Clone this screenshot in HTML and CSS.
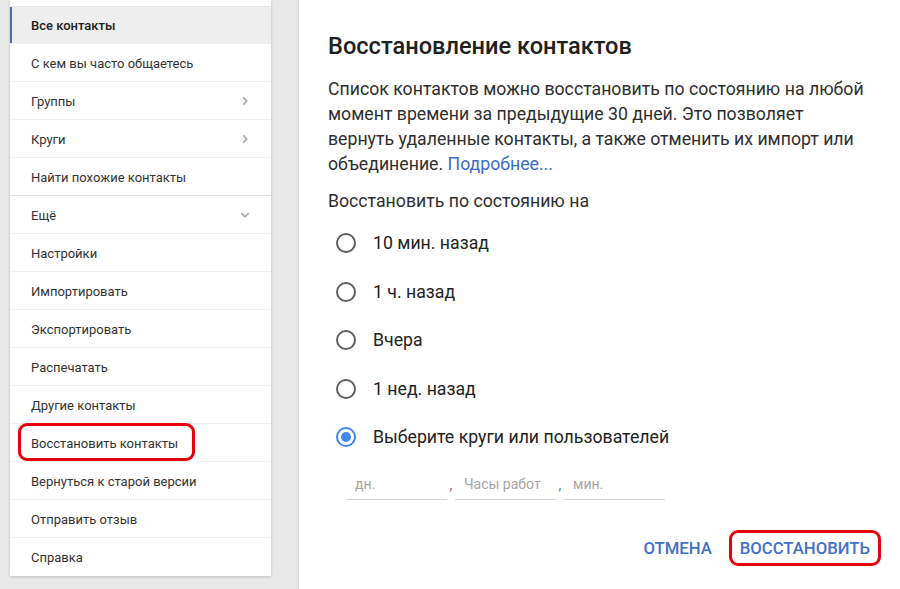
FILE: index.html
```html
<!DOCTYPE html>
<html lang="ru">
<head>
<meta charset="utf-8">
<link rel="stylesheet" href="styles.css">
</head>
<body>
<div class="page">
  <aside class="sidebar">
    <nav class="card">
      <div class="item active">Все контакты</div>
      <div class="item">С кем вы часто общаетесь</div>
      <div class="item">Группы <svg class="chev" viewBox="0 0 10 10"><path d="M3.5 2 L6.5 5 L3.5 8" /></svg></div>
      <div class="item">Круги <svg class="chev" viewBox="0 0 10 10"><path d="M3.5 2 L6.5 5 L3.5 8" /></svg></div>
      <div class="item section-end">Найти похожие контакты</div>
      <div class="item">Ещё <svg class="chev" viewBox="0 0 10 10"><path d="M2 3.5 L5 6.5 L8 3.5" /></svg></div>
      <div class="item">Настройки</div>
      <div class="item">Импортировать</div>
      <div class="item">Экспортировать</div>
      <div class="item">Распечатать</div>
      <div class="item">Другие контакты</div>
      <div class="item marked">Восстановить контакты<span class="mark mark-side"></span></div>
      <div class="item">Вернуться к старой версии</div>
      <div class="item">Отправить отзыв</div>
      <div class="item last">Справка</div>
    </nav>
  </aside>
  <main class="dialog">
    <h1 class="title">Восстановление контактов</h1>
    <p class="desc">Список контактов можно восстановить по состоянию на любой<br>момент времени за предыдущие 30 дней. Это позволяет<br>вернуть удаленные контакты, а также отменить их импорт или<br>объединение. <a class="link">Подробнее...</a></p>
    <div class="label">Восстановить по состоянию на</div>
    <div class="options">
      <div class="option"><span class="radio"></span>10 мин. назад</div>
      <div class="option"><span class="radio"></span>1 ч. назад</div>
      <div class="option"><span class="radio"></span>Вчера</div>
      <div class="option"><span class="radio"></span>1 нед. назад</div>
      <div class="option"><span class="radio checked"></span>Выберите круги или пользователей</div>
    </div>
    <div class="fields">
      <div class="field">дн.</div>
      <span class="comma">,</span>
      <div class="field">Часы работ</div>
      <span class="comma">,</span>
      <div class="field">мин.</div>
    </div>
    <div class="actions">
      <span class="btn">ОТМЕНА</span>
      <span class="btn marked-btn">ВОССТАНОВИТЬ<span class="mark mark-btn"></span></span>
    </div>
  </main>
</div>
</body>
</html>
```

FILE: styles.css
```css
* { box-sizing: border-box; }
html, body { margin: 0; padding: 0; }
body {
  background: #e8e8e8;
  font-family: Roboto, "Noto Sans", Arial, sans-serif;
  color: #262626;
  width: 900px;
  height: 589px;
  overflow: hidden;
}
.page {
  display: flex;
  height: 589px;
}
.sidebar {
  width: 271px;
  padding-left: 10px;
  flex: none;
}
.card {
  background: #fff;
  padding-top: 6px;
  box-shadow: 0 1px 3px rgba(0,0,0,0.18);
}
.item {
  position: relative;
  height: 38px;
  display: flex;
  align-items: center;
  justify-content: space-between;
  padding: 1px 20px 0 21px;
  font-size: 13px;
  color: #333;
  border-bottom: 1px solid #f1f1f1;
}
.item:first-child { border-top: 1px solid #e6e6e6; }
.item.active {
  background: #eeeeee;
  font-weight: 500;
  color: #202020;
  box-shadow: inset 2px 0 0 #4d6bb3;
}
.item.section-end { border-bottom: 1px solid #e2e2e2; }
.item.last { border-bottom: none; }
.chev {
  width: 12px;
  height: 12px;
  fill: none;
  stroke: #a8a8a8;
  stroke-width: 1.4;
}
.mark {
  position: absolute;
  border: 3.5px solid #e8000c;
  border-radius: 9px;
  pointer-events: none;
}
.mark-side {
  left: 8px;
  top: -1px;
  width: 177px;
  height: 38px;
}
.dialog {
  flex: 1;
  margin-left: 28px;
  background: #fff;
  height: 589px;
  padding: 32px 0 0 29px;
  box-shadow: -1px 0 2px rgba(0,0,0,0.08);
}
.title {
  margin: 0;
  font-size: 23.6px;
  line-height: 28px;
  font-weight: 500;
  color: #202020;
}
.desc {
  margin: 17px 0 0;
  width: 560px;
  font-size: 17.7px;
  line-height: 25px;
  color: #2e2e2e;
  white-space: nowrap;
}
.link { color: #3b6cc9; }
.label {
  margin-top: 12px;
  font-size: 17.7px;
  line-height: 25px;
  color: #2e2e2e;
}
.options { margin-top: 5px; }
.option {
  display: flex;
  align-items: center;
  height: 48.5px;
  font-size: 17.7px;
  color: #222;
}
.radio {
  width: 20px;
  height: 20px;
  border: 2px solid #5e5e5e;
  border-radius: 50%;
  margin: 0 17px 0 8px;
  flex: none;
  position: relative;
}
.radio.checked { border-color: #4285f4; }
.radio.checked::after {
  content: "";
  position: absolute;
  left: 3px; top: 3px;
  width: 10px; height: 10px;
  border-radius: 50%;
  background: #4285f4;
}
.fields {
  display: flex;
  align-items: flex-end;
  margin: 8px 0 0 18px;
  height: 30px;
}
.field {
  width: 101px;
  height: 30px;
  border-bottom: 1px solid #d6d6d6;
  font-size: 14px;
  color: #a5a5a5;
  padding: 6px 0 0 9px;
}
.comma {
  width: 8px;
  font-size: 14px;
  color: #777;
  padding-bottom: 7px;
  text-align: center;
}
.actions {
  display: flex;
  justify-content: flex-end;
  align-items: center;
  gap: 28px;
  margin-top: 39px;
  padding-right: 30px;
}
.btn {
  position: relative;
  font-size: 16.7px;
  font-weight: 500;
  color: #4170c8;
  line-height: 20px;
}
.mark-btn {
  left: -11px;
  top: -9px;
  right: -11px;
  bottom: -7px;
}
```
